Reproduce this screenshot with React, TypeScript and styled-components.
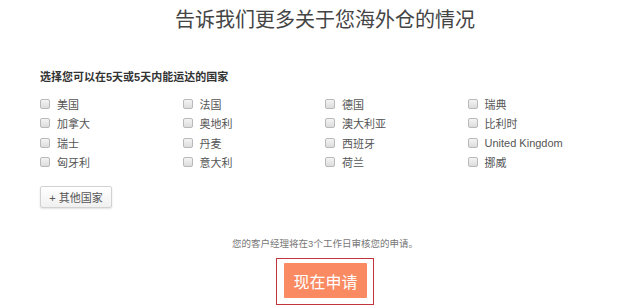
import styled, { createGlobalStyle } from "styled-components";

const GlobalStyle = createGlobalStyle`
    body{
        margin:0;
        background:#fff;
        font-family:"Liberation Sans", "Noto Sans CJK SC", sans-serif;
    }
`;

const Page = styled.div`
    width:570px;
    padding:8px 0 0 40px;
    display:flex;
    flex-direction:column;
`;
const Title = styled.h1`
    margin:0;
    font-size:20px;
    line-height:24px;
    font-weight:normal;
    color:#444;
    text-align:center;
`;
const Subtitle = styled.h2`
    margin:37px 0 0;
    font-size:11px;
    line-height:16px;
    font-weight:bold;
    color:#333;
`;
const Grid = styled.div`
    margin-top:9px;
    display:grid;
    grid-template-columns:repeat(4, 142.5px);
    grid-auto-rows:19.5px;
`;
const Item = styled.label`
    display:flex;
    align-items:center;
    gap:7px;
    font-size:11px;
    color:#555;
`;
const Box = styled.span`
    width:8px;
    height:8px;
    border:1px solid #b9b9b9;
    border-radius:2px;
    background:linear-gradient(#f4f4f4, #dcdcdc);
`;
const MoreButton = styled.button`
    margin-top:14px;
    align-self:flex-start;
    width:72px;
    height:22px;
    padding:0;
    border:1px solid #d2d2d2;
    border-radius:2px;
    background:linear-gradient(#fff, #f0f0f0);
    box-shadow:0 1px 2px rgba(0,0,0,0.12);
    font-family:inherit;
    font-size:11px;
    color:#555;
`;
const Note = styled.p`
    margin:29px 0 0;
    font-size:9.5px;
    line-height:14px;
    color:#777;
    text-align:center;
`;
const Highlight = styled.div`
    margin-top:7px;
    align-self:center;
    padding:4px 6px 6px 7px;
    border:1.5px solid #c4343f;
`;
const ApplyButton = styled.button`
    display:block;
    width:83px;
    height:35px;
    border:none;
    border-radius:1px;
    background:#fa8a62;
    color:#fff;
    font-family:inherit;
    font-size:16px;
`;

const countries = [
    "美国", "法国", "德国", "瑞典",
    "加拿大", "奥地利", "澳大利亚", "比利时",
    "瑞士", "丹麦", "西班牙", "United Kingdom",
    "匈牙利", "意大利", "荷兰", "挪威",
];

const App = () => {
    return (
        <>
            <GlobalStyle />
            <Page>
                <Title>告诉我们更多关于您海外仓的情况</Title>
                <Subtitle>选择您可以在5天或5天内能运达的国家</Subtitle>
                <Grid>
                    {countries.map((c) => (
                        <Item key={c}>
                            <Box />
                            {c}
                        </Item>
                    ))}
                </Grid>
                <MoreButton>+ 其他国家</MoreButton>
                <Note>您的客户经理将在3个工作日审核您的申请。</Note>
                <Highlight>
                    <ApplyButton>现在申请</ApplyButton>
                </Highlight>
            </Page>
        </>
    );
};

export default App;
